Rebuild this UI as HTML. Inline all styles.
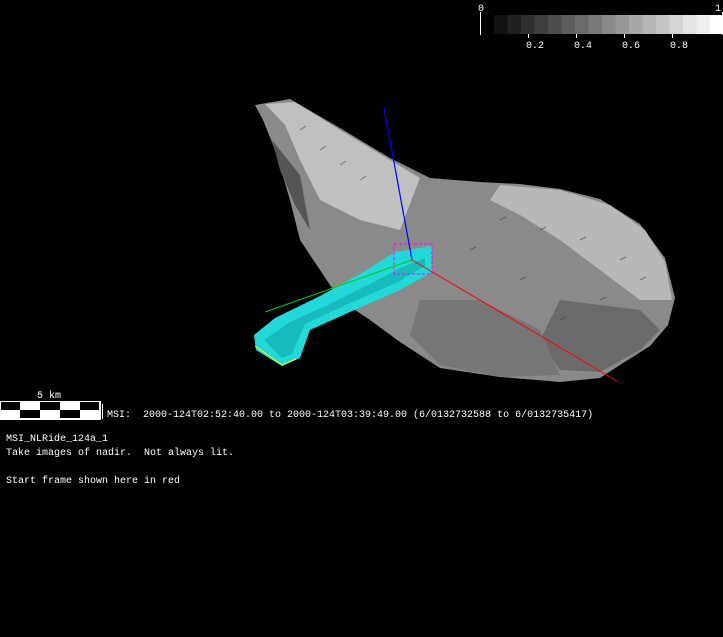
<!DOCTYPE html>
<html><head><meta charset="utf-8"><style>
html,body{margin:0;padding:0;background:#000;width:723px;height:637px;overflow:hidden}
svg{position:absolute;left:0;top:0}
text{font-family:"Liberation Mono","DejaVu Sans Mono",monospace;font-size:10px;fill:#fff;white-space:pre}
</style></head><body>
<svg width="723" height="637" viewBox="0 0 723 637" xmlns="http://www.w3.org/2000/svg" xml:space="preserve">
<rect width="723" height="637" fill="#000"/>
<g>
<rect x="494" y="15" width="13.5" height="19" fill="#111"/>
<rect x="507.5" y="15" width="13.5" height="19" fill="#202020"/>
<rect x="521" y="15" width="13.5" height="19" fill="#2f2f2f"/>
<rect x="534.5" y="15" width="13.5" height="19" fill="#3e3e3e"/>
<rect x="548" y="15" width="13.5" height="19" fill="#4d4d4d"/>
<rect x="561.5" y="15" width="13.5" height="19" fill="#5c5c5c"/>
<rect x="575" y="15" width="13.5" height="19" fill="#6b6b6b"/>
<rect x="588.5" y="15" width="13.5" height="19" fill="#7a7a7a"/>
<rect x="602" y="15" width="13.5" height="19" fill="#898989"/>
<rect x="615.5" y="15" width="13.5" height="19" fill="#989898"/>
<rect x="629" y="15" width="13.5" height="19" fill="#a7a7a7"/>
<rect x="642.5" y="15" width="13.5" height="19" fill="#b6b6b6"/>
<rect x="656" y="15" width="13.5" height="19" fill="#c5c5c5"/>
<rect x="669.5" y="15" width="13.5" height="19" fill="#d4d4d4"/>
<rect x="683" y="15" width="13.5" height="19" fill="#e3e3e3"/>
<rect x="696.5" y="15" width="13.5" height="19" fill="#f0f0f0"/>
<rect x="710" y="15" width="12" height="19" fill="#fff"/>
<line x1="480.5" y1="12" x2="480.5" y2="35" stroke="#fff"/>
<line x1="722.5" y1="12" x2="722.5" y2="35" stroke="#fff"/>
<line x1="528.5" y1="34" x2="528.5" y2="38" stroke="#fff"/>
<line x1="576.5" y1="34" x2="576.5" y2="38" stroke="#fff"/>
<line x1="624.5" y1="34" x2="624.5" y2="38" stroke="#fff"/>
<line x1="672.5" y1="34" x2="672.5" y2="38" stroke="#fff"/>
<text x="478" y="11">0</text>
<text x="715" y="11">1</text>
<text x="526" y="48">0.2</text>
<text x="574" y="48">0.4</text>
<text x="622" y="48">0.6</text>
<text x="670" y="48">0.8</text>
</g>
<polygon points="255,105 290,99 340,128 390,158 430,178 480,182 520,184 560,189 600,199 640,224 665,258 675,298 668,325 650,346 620,365 600,378 560,382 500,377 440,368 400,342 370,320 340,300 320,270 300,240 290,200 275,150 263,120" fill="#8a8a8a"/>
<polygon points="265,104 295,102 340,130 390,160 420,178 400,230 360,220 320,200 300,160 285,125" fill="#c0c0c0"/>
<polygon points="500,185 560,190 610,205 645,230 665,262 672,300 640,300 600,270 560,240 520,215 490,200" fill="#b8b8b8"/>
<polygon points="560,300 640,310 660,330 640,350 600,372 560,370 540,340" fill="#6a6a6a"/>
<polygon points="420,300 480,300 540,330 560,375 500,377 440,365 410,335" fill="#777"/>
<polygon points="272,140 300,175 310,230 295,205 280,170" fill="#555"/>
<g stroke="#444" stroke-width="1" opacity="0.6">
<path d="M300 130l6 -4M320 150l6 -4M340 165l6 -4M360 180l6 -4M500 220l6 -3M540 230l6 -3M580 240l6 -3M620 260l6 -3M600 300l6 -3M560 320l6 -3M470 250l6 -3M520 280l6 -3M640 280l6 -3"/>
</g>
<polygon points="254,335 275,318 320,296 360,274 395,252 432,246 432,272 400,290 350,312 310,330 300,358 282,366 256,350" fill="#22d8d8"/>
<polygon points="264,340 290,322 330,304 370,284 400,268 425,258 425,266 398,282 348,304 305,324 292,354 282,358" fill="#12a8a8" opacity="0.6"/>
<polyline points="255,346 282,365 296,359" fill="none" stroke="#ff0" stroke-width="1"/>
<line x1="265" y1="312" x2="412" y2="260" stroke="#0c0" stroke-width="1"/>
<rect x="394" y="244" width="38" height="30" fill="none" stroke="#f0f" stroke-width="1" stroke-dasharray="3,2"/>
<line x1="384" y1="108" x2="412" y2="260" stroke="#0000ff" stroke-width="1.2"/>
<line x1="412" y1="260" x2="617" y2="381" stroke="#ff0000" stroke-width="1"/>
<rect x="0.5" y="401.5" width="100" height="18" fill="#fff" stroke="#fff"/>
<rect x="1" y="402" width="19" height="8" fill="#000"/>
<rect x="40" y="402" width="20" height="8" fill="#000"/>
<rect x="80" y="402" width="19" height="8" fill="#000"/>
<rect x="20" y="410" width="20" height="8" fill="#000"/>
<rect x="60" y="410" width="20" height="8" fill="#000"/>
<line x1="102.5" y1="404" x2="102.5" y2="419" stroke="#fff"/>
<text x="37" y="398">5 km</text>
<text x="107" y="417">MSI:  2000-124T02:52:40.00 to 2000-124T03:39:49.00 (6/0132732588 to 6/0132735417)</text>
<text x="6" y="441">MSI_NLRide_124a_1</text>
<text x="6" y="455">Take images of nadir.  Not always lit.</text>
<text x="6" y="483">Start frame shown here in red</text>
</svg>
</body></html>
